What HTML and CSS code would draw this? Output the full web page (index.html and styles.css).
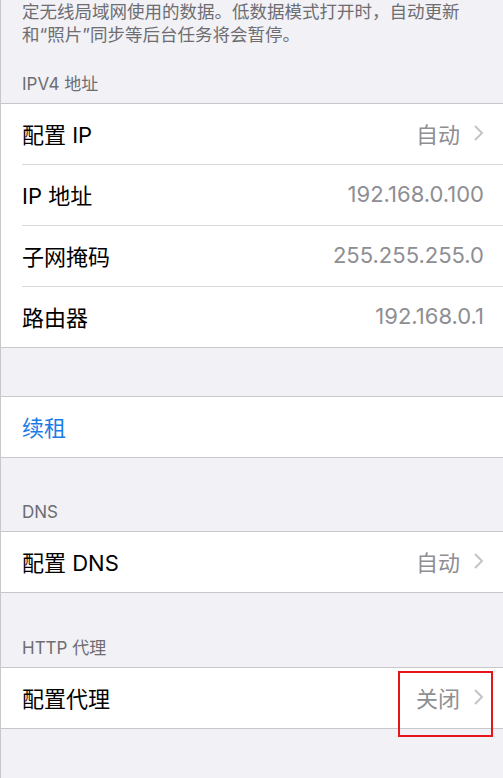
FILE: index.html
```html
<!DOCTYPE html>
<html lang="zh-CN">
<head>
<meta charset="utf-8">
<link rel="stylesheet" href="styles.css">
</head>
<body>
<div class="page">
  <p class="note">定无线局域网使用的数据。低数据模式打开时，自动更新<br>和“照片”同步等后台任务将会暂停。</p>

  <div class="header h-first">IPV4 地址</div>
  <div class="group">
    <div class="row"><span class="label">配置 IP</span><span class="value">自动</span><svg class="chev" width="10" height="16" viewBox="0 0 10 16"><polyline points="1.5,1.5 8,8 1.5,14.5"/></svg></div>
    <div class="row"><span class="label">IP 地址</span><span class="value plain">192.168.0.100</span></div>
    <div class="row"><span class="label">子网掩码</span><span class="value plain">255.255.255.0</span></div>
    <div class="row"><span class="label">路由器</span><span class="value plain">192.168.0.1</span></div>
  </div>

  <div class="spacer"></div>
  <div class="group">
    <div class="row"><span class="label link">续租</span></div>
  </div>

  <div class="header h-dns">DNS</div>
  <div class="group">
    <div class="row"><span class="label">配置 DNS</span><span class="value">自动</span><svg class="chev" width="10" height="16" viewBox="0 0 10 16"><polyline points="1.5,1.5 8,8 1.5,14.5"/></svg></div>
  </div>

  <div class="header h-http">HTTP 代理</div>
  <div class="group">
    <div class="row proxy"><span class="label">配置代理</span><span class="value">关闭</span><svg class="chev" width="10" height="16" viewBox="0 0 10 16"><polyline points="1.5,1.5 8,8 1.5,14.5"/></svg><div class="mark"></div></div>
  </div>
</div>
</body>
</html>
```

FILE: styles.css
```css
html, body {
  margin: 0;
  padding: 0;
  background: #f1f1f6;
}
body {
  font-family: "Inter", "Noto Sans CJK SC", sans-serif;
}
.page {
  min-height: 778px;
  border-left: 1px solid #c8c7cc;
  box-sizing: border-box;
}
.note {
  margin: 0;
  padding: 0 21px;
  font-size: 17.5px;
  line-height: 23px;
  color: #6d6d72;
  white-space: nowrap;
}
.header {
  padding: 0 21px 9px;
  font-size: 17px;
  line-height: 20px;
  color: #6d6d72;
}
.h-first { padding-top: 28px; }
.h-dns { padding-top: 44px; }
.h-http { padding-top: 45px; }
.spacer { height: 48px; }
.group {
  background: #fff;
  border-top: 1px solid #c8c7cc;
  border-bottom: 1px solid #c8c7cc;
}
.row {
  display: flex;
  align-items: center;
  height: 57px;
  padding-bottom: 3px;
  margin-left: 21px;
  padding-right: 19px;
  border-top: 1px solid #d9d9dd;
  position: relative;
}
.row:first-child {
  border-top: none;
}
.label {
  flex: 1;
  font-size: 22px;
  color: #000;
}
.link {
  color: #1a7ce6;
}
.value {
  font-size: 22px;
  color: #8e8e93;
}
.chev {
  margin-left: 14px;
  fill: none;
  stroke: #c4c4c9;
  stroke-width: 2;
  stroke-linecap: round;
  stroke-linejoin: round;
}
.mark {
  position: absolute;
  left: 376px;
  top: 3px;
  width: 91px;
  height: 62px;
  border: 2px solid #e8141b;
}
```
